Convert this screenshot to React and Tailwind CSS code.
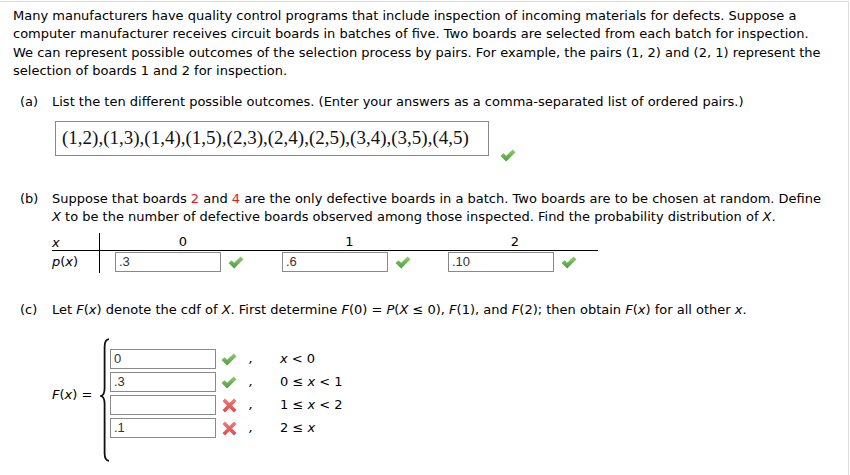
import React from 'react';

const sans = { fontFamily: '"DejaVu Sans", Verdana, sans-serif' };

function Check() {
  return (
    <svg width="16" height="13" viewBox="0 0 16 13" className="shrink-0">
      <defs>
        <linearGradient id="gchk" x1="0" y1="0" x2="0" y2="1">
          <stop offset="0" stopColor="#8fcf72" />
          <stop offset="1" stopColor="#4e9a3e" />
        </linearGradient>
      </defs>
      <path d="M0.5 7 L3.5 4.2 L6.2 6.8 L12.6 0.5 L15.5 3.3 L6.2 12.5 Z" fill="url(#gchk)" />
    </svg>
  );
}

function Cross() {
  return (
    <svg width="15" height="15" viewBox="0 0 15 15" className="shrink-0">
      <defs>
        <linearGradient id="gx" x1="0" y1="0" x2="0" y2="1">
          <stop offset="0" stopColor="#f47a7a" />
          <stop offset="1" stopColor="#e04848" />
        </linearGradient>
      </defs>
      <path
        d="M3 0.5 L7.5 5 L12 0.5 L14.5 3 L10 7.5 L14.5 12 L12 14.5 L7.5 10 L3 14.5 L0.5 12 L5 7.5 L0.5 3 Z"
        fill="url(#gx)"
      />
    </svg>
  );
}

function Field({ value }) {
  return (
    <div
      className="w-[106px] h-[20px] border border-[#8a8a8a] bg-white pl-[3px] text-[13px] leading-[18px] text-[#333]"
      style={{ fontFamily: '"Liberation Sans", Arial, sans-serif' }}
    >
      {value}
    </div>
  );
}

function Brace() {
  return (
    <svg width="10" height="124" viewBox="0 0 10 124" className="shrink-0">
      <path
        d="M9 1.2 Q4.6 1.5 4.6 9 L4.6 50 Q4.6 57 1 58 Q4.6 59 4.6 66 L4.6 115 Q4.6 122.5 9 122.8"
        fill="none"
        stroke="#111"
        strokeWidth="1.8"
      />
    </svg>
  );
}

const pieces = [
  { v: '0', ok: true, cond: <><i>x</i>&nbsp;&lt;&nbsp;0</> },
  { v: '.3', ok: true, cond: <>0&nbsp;≤&nbsp;<i>x</i>&nbsp;&lt;&nbsp;1</> },
  { v: '', ok: false, cond: <>1&nbsp;≤&nbsp;<i>x</i>&nbsp;&lt;&nbsp;2</> },
  { v: '.1', ok: false, cond: <>2&nbsp;≤&nbsp;<i>x</i></> },
];

export default function App() {
  return (
    <div className="w-[850px] h-[475px] bg-white overflow-hidden" style={sans}>
      <div className="mt-px w-[849px] h-[474px] border-t border-r border-[#dcdcdc] text-[13px] text-black">
        <p className="ml-[13px] w-[830px] pt-[5px] leading-[18.3px] whitespace-nowrap">
          Many manufacturers have quality control programs that include inspection of incoming materials for defects. Suppose a
          <br />
          computer manufacturer receives circuit boards in batches of five. Two boards are selected from each batch for inspection.
          <br />
          We can represent possible outcomes of the selection process by pairs. For example, the pairs (1, 2) and (2, 1) represent the
          <br />
          selection of boards 1 and 2 for inspection.
        </p>

        {/* (a) */}
        <div className="mt-[13px] flex pl-[20px] leading-[18px]">
          <span className="w-[32px]">(a)</span>
          <span>List the ten different possible outcomes. (Enter your answers as a comma-separated list of ordered pairs.)</span>
        </div>
        <div className="mt-[10px] ml-[55px] flex items-end gap-[11px]">
          <div
            className="w-[434px] h-[35px] border border-[#888] flex items-center pl-[6px] text-[19px] text-[#111] whitespace-nowrap overflow-hidden"
            style={{ fontFamily: '"Liberation Serif", "Times New Roman", serif' }}
          >
            (1,2),(1,3),(1,4),(1,5),(2,3),(2,4),(2,5),(3,4),(3,5),(4,5)
          </div>
          <div className="mb-[-6px]">
            <Check />
          </div>
        </div>

        {/* (b) */}
        <div className="mt-[34px] flex pl-[20px] leading-[18px]">
          <span className="w-[32px] shrink-0">(b)</span>
          <span className="w-[778px]">
            Suppose that boards <span className="text-[#e8141b]">2</span> and <span className="text-[#e8141b]">4</span> are the only defective boards in a batch. Two boards are to be chosen at random. Define{' '}
            <i>X</i> to be the number of defective boards observed among those inspected. Find the probability distribution of <i>X</i>.
          </span>
        </div>
        <div className="mt-[7px] ml-[52px] w-[546px]">
          <div className="flex h-[18px] border-b border-black items-center">
            <div className="w-[48px] h-full border-r border-black"><i>x</i></div>
            <div className="w-[166px] text-center">0</div>
            <div className="w-[167px] text-center">1</div>
            <div className="w-[164px] text-center">2</div>
          </div>
          <div className="flex h-[22px] items-center">
            <div className="w-[48px] h-full border-r border-black leading-[22px]"><i>p</i>(<i>x</i>)</div>
            {['.3', '.6', '.10'].map((v, i) => (
              <div key={i} className={`flex items-center gap-[7px] ${i === 1 ? 'w-[167px] pl-[16px]' : i === 0 ? 'w-[166px] pl-[15px]' : 'w-[164px] pl-[15px]'}`}>
                <Field value={v} />
                <Check />
              </div>
            ))}
          </div>
        </div>

        {/* (c) */}
        <div className="mt-[28px] flex pl-[20px] leading-[18px]">
          <span className="w-[32px]">(c)</span>
          <span>
            Let <i>F</i>(<i>x</i>) denote the cdf of <i>X</i>. First determine <i>F</i>(0) = <i>P</i>(<i>X</i> ≤ 0), <i>F</i>(1), and <i>F</i>(2); then obtain <i>F</i>(<i>x</i>) for all other <i>x</i>.
          </span>
        </div>
        <div className="mt-[19px] ml-[52px] flex items-start">
          <div className="w-[48px] pt-[48px] leading-[18px]">
            <i>F</i>(<i>x</i>) =
          </div>
          <Brace />
          <div className="pt-[11px] flex flex-col gap-[3px]">
            {pieces.map((p, i) => (
              <div key={i} className="flex items-center h-[20px]">
                <Field value={p.v} />
                <div className="ml-[5px] w-[16px] flex justify-center">{p.ok ? <Check /> : <Cross />}</div>
                <i className="ml-[12px] w-[31px]">,</i>
                <span>{p.cond}</span>
              </div>
            ))}
          </div>
        </div>
      </div>
    </div>
  );
}
